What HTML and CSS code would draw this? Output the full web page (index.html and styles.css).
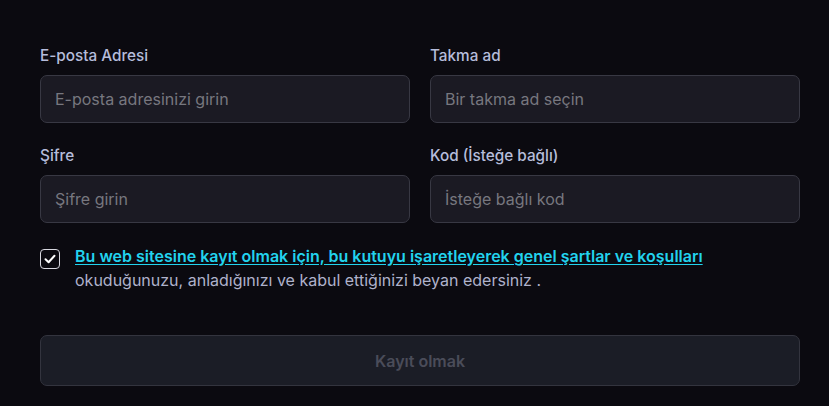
FILE: index.html
```html
<!DOCTYPE html>
<html lang="tr">
<head>
<meta charset="utf-8">
<link rel="stylesheet" href="styles.css">
</head>
<body>
<form class="form">
  <div class="grid">
    <div class="field">
      <label class="label">E-posta Adresi</label>
      <input class="input" type="text" placeholder="E-posta adresinizi girin">
    </div>
    <div class="field">
      <label class="label">Takma ad</label>
      <input class="input" type="text" placeholder="Bir takma ad seçin">
    </div>
    <div class="field">
      <label class="label">Şifre</label>
      <input class="input" type="text" placeholder="Şifre girin">
    </div>
    <div class="field">
      <label class="label">Kod (İsteğe bağlı)</label>
      <input class="input" type="text" placeholder="İsteğe bağlı kod">
    </div>
  </div>
  <div class="agree">
    <span class="check">
      <svg width="14" height="14" viewBox="0 0 14 14"><path d="M2.5 7.3 L5.6 10.2 L11.5 3.8" fill="none" stroke="#fff" stroke-width="2" stroke-linecap="round" stroke-linejoin="round"/></svg>
    </span>
    <p class="agree-text"><a class="link" href="#">Bu web sitesine kayıt olmak için, bu kutuyu işaretleyerek genel şartlar ve koşulları</a><br>okuduğunuzu, anladığınızı ve kabul ettiğinizi beyan edersiniz .</p>
  </div>
  <button class="submit" type="button">Kayıt olmak</button>
</form>
</body>
</html>
```
FILE: styles.css
```css
html, body {
  margin: 0;
  padding: 0;
  background: #0b0a10;
}
body {
  font-family: Inter, "Noto Sans", sans-serif;
  color: #b6bddb;
}
.form {
  width: 760px;
  padding: 46px 0 0 40px;
}
.grid {
  display: grid;
  grid-template-columns: 370px 370px;
  column-gap: 20px;
  row-gap: 23px;
}
.field {
  display: flex;
  flex-direction: column;
}
.label {
  font-size: 15.3px;
  font-weight: 500;
  line-height: 20px;
  color: #b6bddb;
  margin-bottom: 9px;
}
.input {
  box-sizing: border-box;
  height: 48px;
  width: 100%;
  background: #1b1a23;
  border: 1px solid #383843;
  border-radius: 7px;
  padding: 0 14px;
  font-family: Inter, "Noto Sans", sans-serif;
  font-size: 16px;
  color: #e0e0e8;
  outline: none;
}
.input::placeholder {
  color: #77777f;
}
.agree {
  display: flex;
  align-items: flex-start;
  gap: 15px;
  margin-top: 21px;
}
.check {
  box-sizing: border-box;
  flex: none;
  width: 20px;
  height: 20px;
  margin-top: 5px;
  border: 1.5px solid #d8d8e0;
  border-radius: 4px;
  display: flex;
  align-items: center;
  justify-content: center;
}
.agree-text {
  margin: 0;
  font-size: 16px;
  line-height: 24px;
  color: #afb2cb;
}
.link {
  color: #22d3ee;
  font-weight: 600;
  text-decoration: underline;
  text-underline-offset: 2px;
}
.submit {
  display: block;
  box-sizing: border-box;
  width: 760px;
  height: 51px;
  margin-top: 43px;
  background: #1b1d26;
  border: 1px solid #33343e;
  border-radius: 7px;
  font-family: Inter, "Noto Sans", sans-serif;
  font-size: 16px;
  font-weight: 600;
  color: #4a4c59;
}
```
